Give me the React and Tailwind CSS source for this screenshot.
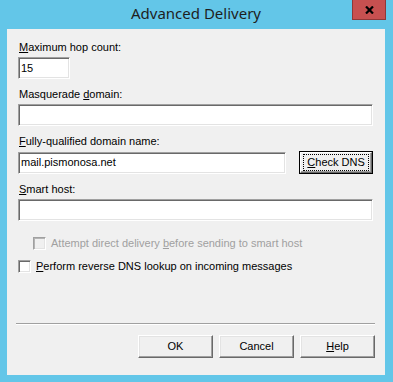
const sunken =
  "border border-t-[#a0a0a0] border-l-[#a0a0a0] border-r-white border-b-white shadow-[inset_1px_1px_0_#696969,inset_-1px_-1px_0_#e3e3e3] bg-white";

const raised =
  "border border-t-white border-l-white border-r-[#696969] border-b-[#696969] shadow-[inset_-1px_-1px_0_#a0a0a0,inset_1px_1px_0_#e3e3e3] bg-[#f0f0f0]";

function Field({ value, className = "" }) {
  return (
    <div className={`${sunken} h-[22px] flex items-center pl-[2px] text-black ${className}`}>
      {value}
    </div>
  );
}

function Label({ children, className = "" }) {
  return <div className={`leading-[13px] ml-px ${className}`}>{children}</div>;
}

function Checkbox({ disabled }) {
  return (
    <span
      className={`inline-block w-[13px] h-[13px] shrink-0 border border-t-[#a0a0a0] border-l-[#a0a0a0] border-r-white border-b-white ${
        disabled
          ? "bg-[#f0f0f0] shadow-[inset_1px_1px_0_#b4b4b4,inset_-1px_-1px_0_#e3e3e3]"
          : "bg-white shadow-[inset_1px_1px_0_#696969,inset_-1px_-1px_0_#e3e3e3]"
      }`}
    />
  );
}

function Button({ children }) {
  return (
    <button className={`${raised} w-[75px] h-[23px] flex items-center justify-center text-black`}>
      {children}
    </button>
  );
}

export default function App() {
  return (
    <div
      className="w-[393px] h-[382px] bg-[#63c6e8] flex flex-col px-[7px] pb-[7px] pr-[8px] text-[11px] text-black"
      style={{ fontFamily: '"Liberation Sans", Arial, sans-serif' }}
    >
      {/* title bar */}
      <div className="h-[29px] grid grid-cols-[1fr_auto_1fr] shrink-0">
        <div />
        <div
          className="text-[15px] text-[#1e1e1e] pt-[3px] leading-[20px]"
          style={{ fontFamily: '"Noto Sans", "Open Sans", sans-serif' }}
        >
          Advanced Delivery
        </div>
        <div className="flex justify-end -mr-[1px]">
          <div className="w-[34px] h-[20px] bg-[#c75050] border border-t-0 border-[#8f3838] flex items-center justify-center">
            <svg width="9" height="8" viewBox="0 0 9 8">
              <path d="M1 0.5 L8 7.5 M8 0.5 L1 7.5" stroke="#000" strokeWidth="2.2" />
            </svg>
          </div>
        </div>
      </div>

      {/* client area */}
      <div className="flex-1 bg-[#f0f0f0] flex flex-col pl-[11px] pr-[12px] pt-[12px] pb-[17px]">
        <Label>
          <u>M</u>aximum hop count:
        </Label>
        <Field value="15" className="mt-[3px] w-[52px]" />

        <Label className="mt-[9px]">
          Masquerade <u>d</u>omain:
        </Label>
        <Field value="" className="mt-[3px]" />

        <Label className="mt-[9px]">
          <u>F</u>ully-qualified domain name:
        </Label>
        <div className="mt-[3px] flex items-center">
          <Field value="mail.pismonosa.net" className="w-[269px]" />
          <button className="ml-[13px] w-[74px] h-[23px] border border-black bg-[#f0f0f0] p-0">
            <div className="h-full border border-t-white border-l-white border-r-[#696969] border-b-[#696969] shadow-[inset_-1px_-1px_0_#a0a0a0] flex items-center justify-center">
              <span className="border border-dotted border-black w-[66px] h-[17px] flex items-center justify-center">
                <u>C</u>heck DNS
              </span>
            </div>
          </button>
        </div>

        <Label className="mt-[9px]">
          <u>S</u>mart host:
        </Label>
        <Field value="" className="mt-[3px]" />

        <div className="mt-[16px] ml-[15px] flex items-center gap-[5px] text-[#a0a0a0] leading-[13px]">
          <Checkbox disabled />
          <span>
            Attempt direct delivery <u>b</u>efore sending to smart host
          </span>
        </div>
        <div className="mt-[10px] flex items-center gap-[5px] leading-[13px]">
          <Checkbox />
          <span>
            <u>P</u>erform reverse DNS lookup on incoming messages
          </span>
        </div>

        <div className="mt-auto -ml-[2px] mr-[-2px] border-t border-t-[#a0a0a0] border-b border-b-white" />
        <div className="mt-[10px] flex justify-end gap-[6px] mr-[-2px]">
          <Button>OK</Button>
          <Button>Cancel</Button>
          <Button>
            <u>H</u>elp
          </Button>
        </div>
      </div>
    </div>
  );
}
